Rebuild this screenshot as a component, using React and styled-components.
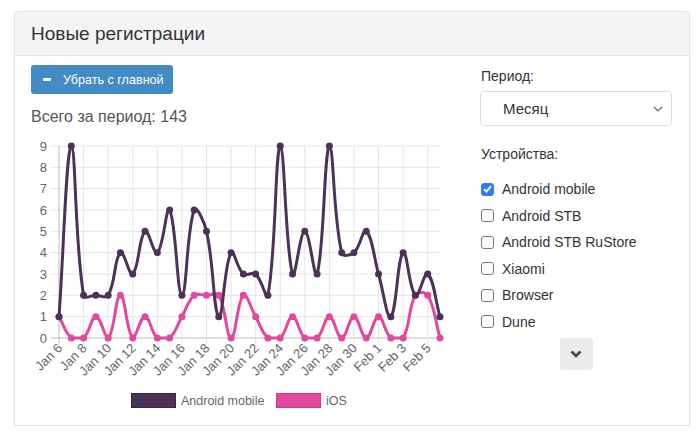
import React from 'react';
import styled, { createGlobalStyle } from 'styled-components';

const GlobalStyle = createGlobalStyle`
    html, body {
        margin: 0;
        padding: 0;
        background: #fff;
        font-family: 'Liberation Sans', Arial, sans-serif;
        color: #333;
    }
`;

const Page = styled.div`
    padding: 11px 11px 0 14px;
`;

const Panel = styled.div`
    width: 674px;
    border: 1px solid #e3e3e3;
    border-radius: 4px;
    box-shadow: 0 1px 2px rgba(0, 0, 0, 0.08);
    background: #fff;
    overflow: hidden;
`;

const PanelHeader = styled.div`
    height: 43px;
    background: #f4f4f4;
    border-bottom: 1px solid #e6e6e6;
    display: flex;
    align-items: center;
    padding: 0 16px;
    font-size: 19px;
    color: #333;
`;

const PanelBody = styled.div`
    display: grid;
    grid-template-columns: 420px 192px;
    column-gap: 29px;
    padding: 9px 16px 9px 16px;
`;

const LeftCol = styled.div`
    display: flex;
    flex-direction: column;
    align-items: flex-start;
`;

const PrimaryButton = styled.button`
    height: 29px;
    width: 142px;
    border: none;
    border-radius: 3px;
    background: #428bc4;
    color: #fff;
    font-family: 'Liberation Sans', Arial, sans-serif;
    font-size: 12.6px;
    white-space: nowrap;
    display: flex;
    align-items: center;
    gap: 12px;
    padding: 0 12px;
    cursor: pointer;

    .minus {
        flex: none;
        width: 8px;
        height: 3px;
        border-radius: 1px;
        background: #fff;
    }
`;

const Total = styled.div`
    margin-top: 12px;
    font-size: 16px;
    line-height: 22px;
    color: #555;
`;

const ChartSvg = styled.svg`
    display: block;
    margin-top: 8px;
    font-family: 'Liberation Sans', Arial, sans-serif;
`;

const RightCol = styled.div`
    display: flex;
    flex-direction: column;
`;

const Label = styled.div`
    font-size: 14px;
    line-height: 20px;
    color: #333;
    margin-top: ${(p) => p.$top || 0}px;
    padding-left: 1px;
`;

const SelectBox = styled.div`
    margin-top: 5px;
    height: 33px;
    border: 1px solid #ddd;
    border-radius: 4px;
    display: flex;
    align-items: center;
    justify-content: space-between;
    padding: 0 8px 0 22px;
    font-size: 15px;
    color: #333;
`;

const DeviceList = styled.div`
    margin-top: 12px;
    display: flex;
    flex-direction: column;
`;

const DeviceRow = styled.label`
    height: 26.5px;
    display: flex;
    align-items: center;
    gap: 8px;
    font-size: 14px;
    color: #333;
    padding-left: 1px;
`;

const Box = styled.span`
    width: 13px;
    height: 13px;
    box-sizing: border-box;
    border-radius: 3px;
    border: 1px solid ${(p) => (p.$checked ? '#2f7cf6' : '#777')};
    background: ${(p) => (p.$checked ? '#2f7cf6' : '#fff')};
    display: flex;
    align-items: center;
    justify-content: center;
`;

const MoreButton = styled.button`
    align-self: center;
    margin-top: 3px;
    width: 33px;
    height: 32px;
    border: none;
    border-radius: 3px;
    background: #ebebeb;
    display: flex;
    align-items: center;
    justify-content: center;
    cursor: pointer;
`;

const android = [1, 9, 2, 2, 2, 4, 3, 5, 4, 6, 2, 6, 5, 1, 4, 3, 3, 2, 9, 3, 5, 3, 9, 4, 4, 5, 3, 1, 4, 2, 3, 1];
const ios = [1, 0, 0, 1, 0, 2, 0, 1, 0, 0, 1, 2, 2, 2, 0, 2, 1, 0, 0, 1, 0, 0, 1, 0, 1, 0, 1, 0, 0, 2, 2, 0];

const labels = [];
for (let d = 6; d <= 31; d++) labels.push('Jan ' + d);
for (let d = 1; d <= 6; d++) labels.push('Feb ' + d);

const DARK = '#4c3257';
const PINK = '#e2489f';

const X0 = 28;
const X1 = 409;
const YTOP = 10;
const YBOT = 202;

const px = (i) => X0 + ((X1 - X0) * i) / (android.length - 1);
const py = (v) => YBOT - ((YBOT - YTOP) * v) / 9;

// chart.js style bezier with tension 0.4
function splinePath(values) {
    const pts = values.map((v, i) => ({ x: px(i), y: py(v) }));
    const t = 0.4;
    const ctrl = pts.map((cur, i) => {
        const prev = pts[i - 1] || cur;
        const next = pts[i + 1] || cur;
        const d01 = Math.hypot(cur.x - prev.x, cur.y - prev.y);
        const d12 = Math.hypot(next.x - cur.x, next.y - cur.y);
        let s01 = d01 / (d01 + d12);
        let s12 = d12 / (d01 + d12);
        if (isNaN(s01)) s01 = 0;
        if (isNaN(s12)) s12 = 0;
        const fa = t * s01;
        const fb = t * s12;
        const clampY = (y) => Math.max(YTOP, Math.min(YBOT, y));
        return {
            prev: { x: cur.x - fa * (next.x - prev.x), y: clampY(cur.y - fa * (next.y - prev.y)) },
            next: { x: cur.x + fb * (next.x - prev.x), y: clampY(cur.y + fb * (next.y - prev.y)) },
        };
    });
    let d = `M${pts[0].x},${pts[0].y}`;
    for (let i = 1; i < pts.length; i++) {
        const a = ctrl[i - 1].next;
        const b = ctrl[i].prev;
        d += ` C${a.x},${a.y} ${b.x},${b.y} ${pts[i].x},${pts[i].y}`;
    }
    return { d, pts };
}

function Series({ values, color }) {
    const { d, pts } = splinePath(values);
    return (
        <g>
            <path d={d} fill="none" stroke={color} strokeWidth="3" />
            {pts.map((p, i) => (
                <circle key={i} cx={p.x} cy={p.y} r="3.5" fill={color} />
            ))}
        </g>
    );
}

function Chart() {
    const yTicks = [0, 1, 2, 3, 4, 5, 6, 7, 8, 9];
    const xTicks = labels.map((l, i) => i).filter((i) => i % 2 === 0);

    return (
        <ChartSvg width="420" height="280" viewBox="0 0 420 280">
            {yTicks.map((v) => (
                <g key={v}>
                    <line x1={X0 - 8} x2={X1} y1={py(v)} y2={py(v)} stroke={v === 0 ? '#bdbdbd' : '#e5e5e5'} strokeWidth="1" />
                    <text x="16" y={py(v) + 4.5} fontSize="13" fill="#666" textAnchor="end">{v}</text>
                </g>
            ))}
            {xTicks.map((i) => (
                <g key={i}>
                    <line x1={px(i)} x2={px(i)} y1={YTOP} y2={YBOT + 7} stroke={i === 0 ? '#bdbdbd' : '#e5e5e5'} strokeWidth="1" />
                    <text
                        transform={`translate(${px(i) + 4},${YBOT + 11}) rotate(-45)`}
                        fontSize="13"
                        fill="#666"
                        textAnchor="end"
                    >
                        {labels[i]}
                    </text>
                </g>
            ))}
            <Series values={ios} color={PINK} />
            <Series values={android} color={DARK} />

            <rect x="100.5" y="257.5" width="44" height="14" fill={DARK} stroke="#3a2444" />
            <text x="150" y="269" fontSize="12.5" fill="#666">Android mobile</text>
            <rect x="245.5" y="257.5" width="44" height="14" fill={PINK} stroke="#c93a8a" />
            <text x="295" y="269" fontSize="12.5" fill="#666">iOS</text>
        </ChartSvg>
    );
}

const devices = [
    { name: 'Android mobile', checked: true },
    { name: 'Android STB' },
    { name: 'Android STB RuStore' },
    { name: 'Xiaomi' },
    { name: 'Browser' },
    { name: 'Dune' },
];

export default function App() {
    return (
        <Page>
            <GlobalStyle />
            <Panel>
                <PanelHeader>Новые регистрации</PanelHeader>
                <PanelBody>
                    <LeftCol>
                        <PrimaryButton>
                            <span className="minus" />
                            Убрать с главной
                        </PrimaryButton>
                        <Total>Всего за период: 143</Total>
                        <Chart />
                    </LeftCol>
                    <RightCol>
                        <Label $top={1}>Период:</Label>
                        <SelectBox>
                            <span>Месяц</span>
                            <svg width="10" height="6" viewBox="0 0 10 6">
                                <path d="M1 1 L5 5 L9 1" fill="none" stroke="#666" strokeWidth="1.2" />
                            </svg>
                        </SelectBox>
                        <Label $top={18}>Устройства:</Label>
                        <DeviceList>
                            {devices.map((dev) => (
                                <DeviceRow key={dev.name}>
                                    <Box $checked={dev.checked}>
                                        {dev.checked && (
                                            <svg width="9" height="8" viewBox="0 0 9 8">
                                                <path d="M1 4.2 L3.4 6.6 L8 1.2" fill="none" stroke="#fff" strokeWidth="1.8" />
                                            </svg>
                                        )}
                                    </Box>
                                    {dev.name}
                                </DeviceRow>
                            ))}
                        </DeviceList>
                        <MoreButton>
                            <svg width="12" height="8" viewBox="0 0 12 8">
                                <path d="M1.5 1.5 L6 6 L10.5 1.5" fill="none" stroke="#444" strokeWidth="2.6" />
                            </svg>
                        </MoreButton>
                    </RightCol>
                </PanelBody>
            </Panel>
        </Page>
    );
}
